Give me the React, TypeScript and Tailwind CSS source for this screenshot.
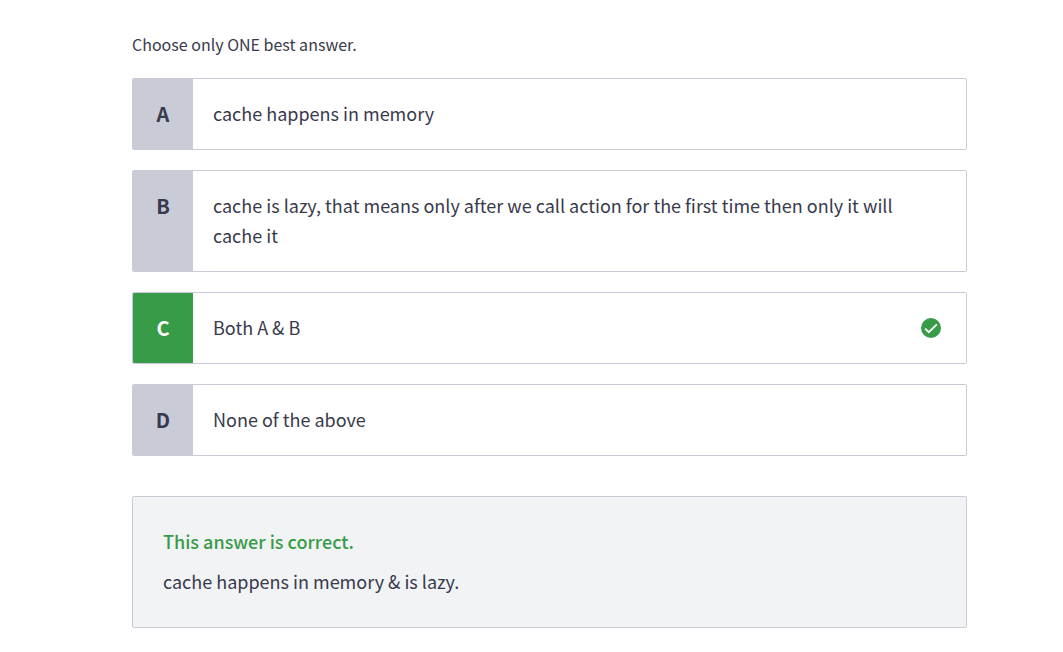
import { useState } from "react";

type Option = { letter: string; text: string };

const options: Option[] = [
  { letter: "A", text: "cache happens in memory" },
  {
    letter: "B",
    text: "cache is lazy, that means only after we call action for the first time then only it will cache it",
  },
  { letter: "C", text: "Both A & B" },
  { letter: "D", text: "None of the above" },
];

const correctLetter = "C";

function CheckIcon() {
  return (
    <svg viewBox="0 0 20 20" className="size-5 shrink-0" role="img" aria-label="Correct">
      <circle cx="10" cy="10" r="10" fill="#389b48" />
      <path d="M4.2 10.6 7.8 14.2 15.8 6.4" fill="none" stroke="#fff" strokeWidth="1.8" />
    </svg>
  );
}

function AnswerOption({
  option,
  selected,
  onSelect,
}: {
  option: Option;
  selected: boolean;
  onSelect: () => void;
}) {
  const correct = selected && option.letter === correctLetter;
  return (
    <label className="flex cursor-pointer overflow-hidden rounded-xs border border-[#c9cbd6] bg-white has-focus-visible:outline-2">
      <input
        type="radio"
        name="answer"
        value={option.letter}
        checked={selected}
        onChange={onSelect}
        className="sr-only"
      />
      <span
        className={
          correct
            ? "w-15 shrink-0 bg-[#389b48] py-5 text-center text-xl leading-[30px] font-bold text-white"
            : "w-15 shrink-0 bg-[#c9ccd6] py-5 text-center text-xl leading-[30px] font-bold text-[#383a4f]"
        }
      >
        {option.letter}
      </span>
      <span className="flex-1 pt-[19px] pb-[21px] pl-5">{option.text}</span>
      <span className="flex w-16 shrink-0 items-center justify-center pr-[6px]">
        {correct && <CheckIcon />}
      </span>
    </label>
  );
}

export default function App() {
  const [selected, setSelected] = useState(correctLetter);

  return (
    <main className="bg-white pt-8 pr-24 pb-6 pl-[132px] font-['Noto_Sans_CJK_SC',sans-serif] text-lg leading-[30px] text-[#383a4c]">
      <fieldset>
        <legend className="mb-[22px] text-base leading-6">Choose only ONE best answer.</legend>
        <div className="flex flex-col gap-5">
          {options.map((option) => (
            <AnswerOption
              key={option.letter}
              option={option}
              selected={selected === option.letter}
              onSelect={() => setSelected(option.letter)}
            />
          ))}
        </div>
      </fieldset>
      {selected === correctLetter && (
        <section className="mt-10 rounded-xs border border-[#c9cbd6] bg-[#f1f3f5] px-[30px] pt-[29px] pb-[31px]">
          <h2 className="mb-[10px] font-medium text-[#389b48]">This answer is correct.</h2>
          <p>cache happens in memory &amp; is lazy.</p>
        </section>
      )}
    </main>
  );
}
